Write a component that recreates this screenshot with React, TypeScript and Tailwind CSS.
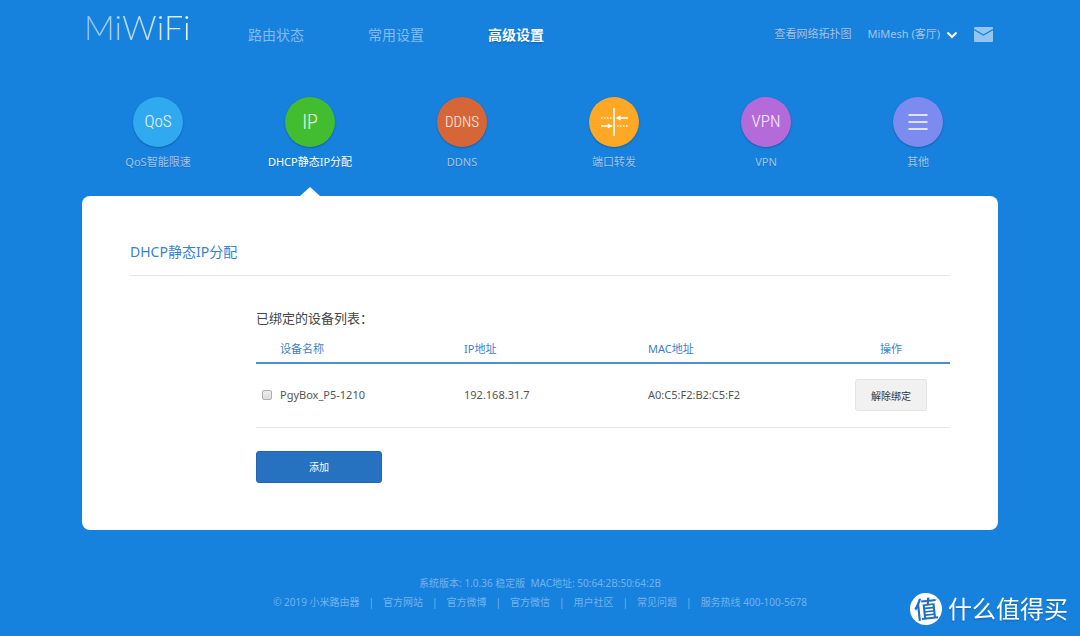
type Feature = {
  label: string;
  badge: string;
  color: string;
  badgeSize: string;
  icon?: 'forward' | 'menu';
};

type Device = {
  id: string;
  name: string;
  ip: string;
  mac: string;
};

const tabs = ['路由状态', '常用设置', '高级设置'];
const activeTab = '高级设置';

const features: Feature[] = [
  { label: 'QoS智能限速', badge: 'QoS', color: 'bg-[#31a9f0]', badgeSize: 'text-[17px]' },
  { label: 'DHCP静态IP分配', badge: 'IP', color: 'bg-[#42bd30]', badgeSize: 'text-[20px]' },
  { label: 'DDNS', badge: 'DDNS', color: 'bg-[#d66638]', badgeSize: 'text-[15px]' },
  { label: '端口转发', badge: '', color: 'bg-[#fea825]', badgeSize: '', icon: 'forward' },
  { label: 'VPN', badge: 'VPN', color: 'bg-[#b46ad8]', badgeSize: 'text-[17px]' },
  { label: '其他', badge: '', color: 'bg-[#7b8bf0]', badgeSize: '', icon: 'menu' },
];
const activeFeature = 'DHCP静态IP分配';

const devices: Device[] = [
  { id: 'pgybox', name: 'PgyBox_P5-1210', ip: '192.168.31.7', mac: 'A0:C5:F2:B2:C5:F2' },
];

const footerLinks = ['官方网站', '官方微博', '官方微信', '用户社区', '常见问题'];

function ForwardIcon() {
  return (
    <svg width="28" height="30" viewBox="0 0 28 30" fill="none" stroke="white" aria-hidden="true">
      <path d="M14 1v28" strokeWidth="1.6" />
      <path d="M1 11h11M17 19h11" strokeWidth="1.3" strokeDasharray="1.4 1.6" />
      <path d="M19 11h9M1 19h8" strokeWidth="1.4" />
      <path d="M15.5 11l5-2.6v5.2zM12.8 19l-5-2.6v5.2z" fill="white" stroke="none" />
    </svg>
  );
}

function MenuIcon() {
  return (
    <svg width="20" height="18" viewBox="0 0 20 18" stroke="white" strokeWidth="1.5" strokeLinecap="round" aria-hidden="true">
      <path d="M1 2h18M1 9h18M1 16h18" />
    </svg>
  );
}

function Header() {
  return (
    <header className="flex h-[69px] items-center pl-0.5">
      <a
        href="#home"
        className="flex w-[164px] items-center bg-linear-to-r from-white/50 to-white/90 to-60% bg-clip-text pb-4 font-['Lato','Noto_Sans',sans-serif] text-[34px] leading-[36px] font-light text-transparent"
      >
        MiWiFi
      </a>
      <nav className="flex">
        {tabs.map((tab) => (
          <a
            key={tab}
            href="#tab"
            className={`w-[120px] text-sm ${
              tab === activeTab ? 'font-bold text-white text-shadow-sm' : 'text-[#83bbec] hover:text-white'
            }`}
          >
            {tab}
          </a>
        ))}
      </nav>
      <div className="ml-auto flex items-center pr-[5px] text-[11px] text-[#a3c4e6] text-shadow-2xs">
        <a href="#topology" className="hover:text-white">
          查看网络拓扑图
        </a>
        <button type="button" className="ml-4 flex items-center gap-1.5 hover:text-white">
          MiMesh (客厅)
          <svg width="12" height="8" viewBox="0 0 12 8" fill="none" stroke="white" strokeWidth="2" aria-hidden="true">
            <path d="M1.5 1.5L6 6l4.5-4.5" />
          </svg>
        </button>
        <button type="button" aria-label="消息" className="ml-4">
          <svg width="19" height="15" viewBox="0 0 19 15" fill="none" aria-hidden="true">
            <rect width="19" height="15" rx="1" fill="#93c5f1" />
            <path d="M0 2.5L9.5 8 19 2.5" stroke="#1781de" strokeWidth="1.2" />
          </svg>
        </button>
      </div>
    </header>
  );
}

function FeatureItem({ feature }: { feature: Feature }) {
  const active = feature.label === activeFeature;

  return (
    <a href="#feature" className="flex flex-1 flex-col items-center">
      <span
        className={`flex size-[50px] items-center justify-center rounded-full font-['Roboto_Condensed','Roboto',sans-serif] font-light text-white/90 shadow-[0_1px_2px_rgba(0,0,0,0.25)] ${feature.color} ${feature.badgeSize}`}
      >
        {feature.icon === 'forward' && <ForwardIcon />}
        {feature.icon === 'menu' && <MenuIcon />}
        {feature.badge}
      </span>
      <span
        className={`mt-[7px] text-[11px] leading-4 text-shadow-2xs ${active ? 'text-white' : 'text-[#a3c4e6]'}`}
      >
        {feature.label}
      </span>
      <span className="mt-[17px] h-[9px]">
        {active && (
          <svg width="20" height="9" viewBox="0 0 20 9" fill="white" aria-hidden="true">
            <path d="M10 0l10 9H0z" />
          </svg>
        )}
      </span>
    </a>
  );
}

function DeviceTable() {
  return (
    <table className="w-full table-fixed border-collapse text-left text-[11px]">
      <thead>
        <tr className="h-[31px] border-b-2 border-[#4a8fd0] text-[#3d7fc8]">
          <th className="w-[184px] pt-1 pl-6 font-normal">设备名称</th>
          <th className="w-[184px] pt-1 pl-6 font-normal">IP地址</th>
          <th className="pt-1 pl-6 font-normal">MAC地址</th>
          <th className="w-[118px] pt-1 text-center font-normal">操作</th>
        </tr>
      </thead>
      <tbody>
        {devices.map((device) => (
          <tr key={device.id} className="h-16 border-b border-[#e4e4e4] text-[#555]">
            <td>
              <div className="flex items-center gap-2 pl-1.5">
                <input
                  id={device.id}
                  type="checkbox"
                  className="size-2.5 appearance-none rounded-xs border border-[#b0b0b0] bg-linear-to-b from-[#ececec] to-[#dcdcdc] checked:bg-[#2672c0]"
                />
                <label htmlFor={device.id}>{device.name}</label>
              </div>
            </td>
            <td className="pl-6">{device.ip}</td>
            <td className="pl-6">{device.mac}</td>
            <td className="text-center">
              <button
                type="button"
                className="h-8 w-[72px] rounded-[3px] border border-[#e4e4e4] bg-[#f1f1f1] pt-0.5 text-[10px] text-[#333]"
              >
                解除绑定
              </button>
            </td>
          </tr>
        ))}
      </tbody>
    </table>
  );
}

function Footer() {
  return (
    <footer className="mt-11 pb-6 text-center text-[10px] leading-[19px] text-[#74b3ec]">
      <p className="whitespace-pre">系统版本: 1.0.36 稳定版  MAC地址: 50:64:2B:50:64:2B</p>
      <p className="flex justify-center gap-[9px]">
        <span>© 2019 小米路由器</span>
        {footerLinks.map((link) => (
          <span key={link} className="flex gap-[9px]">
            <span>|</span>
            <a href="#footer" className="hover:text-white">
              {link}
            </a>
          </span>
        ))}
        <span>|</span>
        <span>服务热线 400-100-5678</span>
      </p>
    </footer>
  );
}

export default function App() {
  return (
    <div className="min-h-screen bg-[#1781de] font-['Noto_Sans','Noto_Sans_CJK_SC',sans-serif]">
      <div className="mx-auto max-w-[916px]">
        <Header />
        <div className="mt-7 flex pr-1">
          {features.map((feature) => (
            <FeatureItem key={feature.label} feature={feature} />
          ))}
        </div>
        <main className="rounded-lg bg-white px-12 pt-[45px] pb-[47px]">
          <h1 className="border-b border-[#e4e4e4] pb-3 text-sm leading-[22px] text-[#3d7fc8]">DHCP静态IP分配</h1>
          <section className="mt-8 pl-[126px]">
            <h2 className="text-[13px] leading-5 text-[#444]">已绑定的设备列表：</h2>
            <div className="mt-1">
              <DeviceTable />
            </div>
            <button
              type="button"
              className="mt-[23px] h-8 w-[126px] rounded-[3px] border border-[#1f66b0] bg-[#2672c0] pt-0.5 text-[10px] text-white"
            >
              添加
            </button>
          </section>
        </main>
        <Footer />
      </div>
      <div className="fixed right-3 bottom-[11px] flex items-center gap-1.5 text-white">
        <span className="flex size-8 -rotate-6 items-center justify-center rounded-full bg-white text-[24px] leading-8 font-medium text-[#1f6fc0]">
          值
        </span>
        <span className="text-[24px] leading-8 text-shadow-sm">什么值得买</span>
      </div>
    </div>
  );
}
